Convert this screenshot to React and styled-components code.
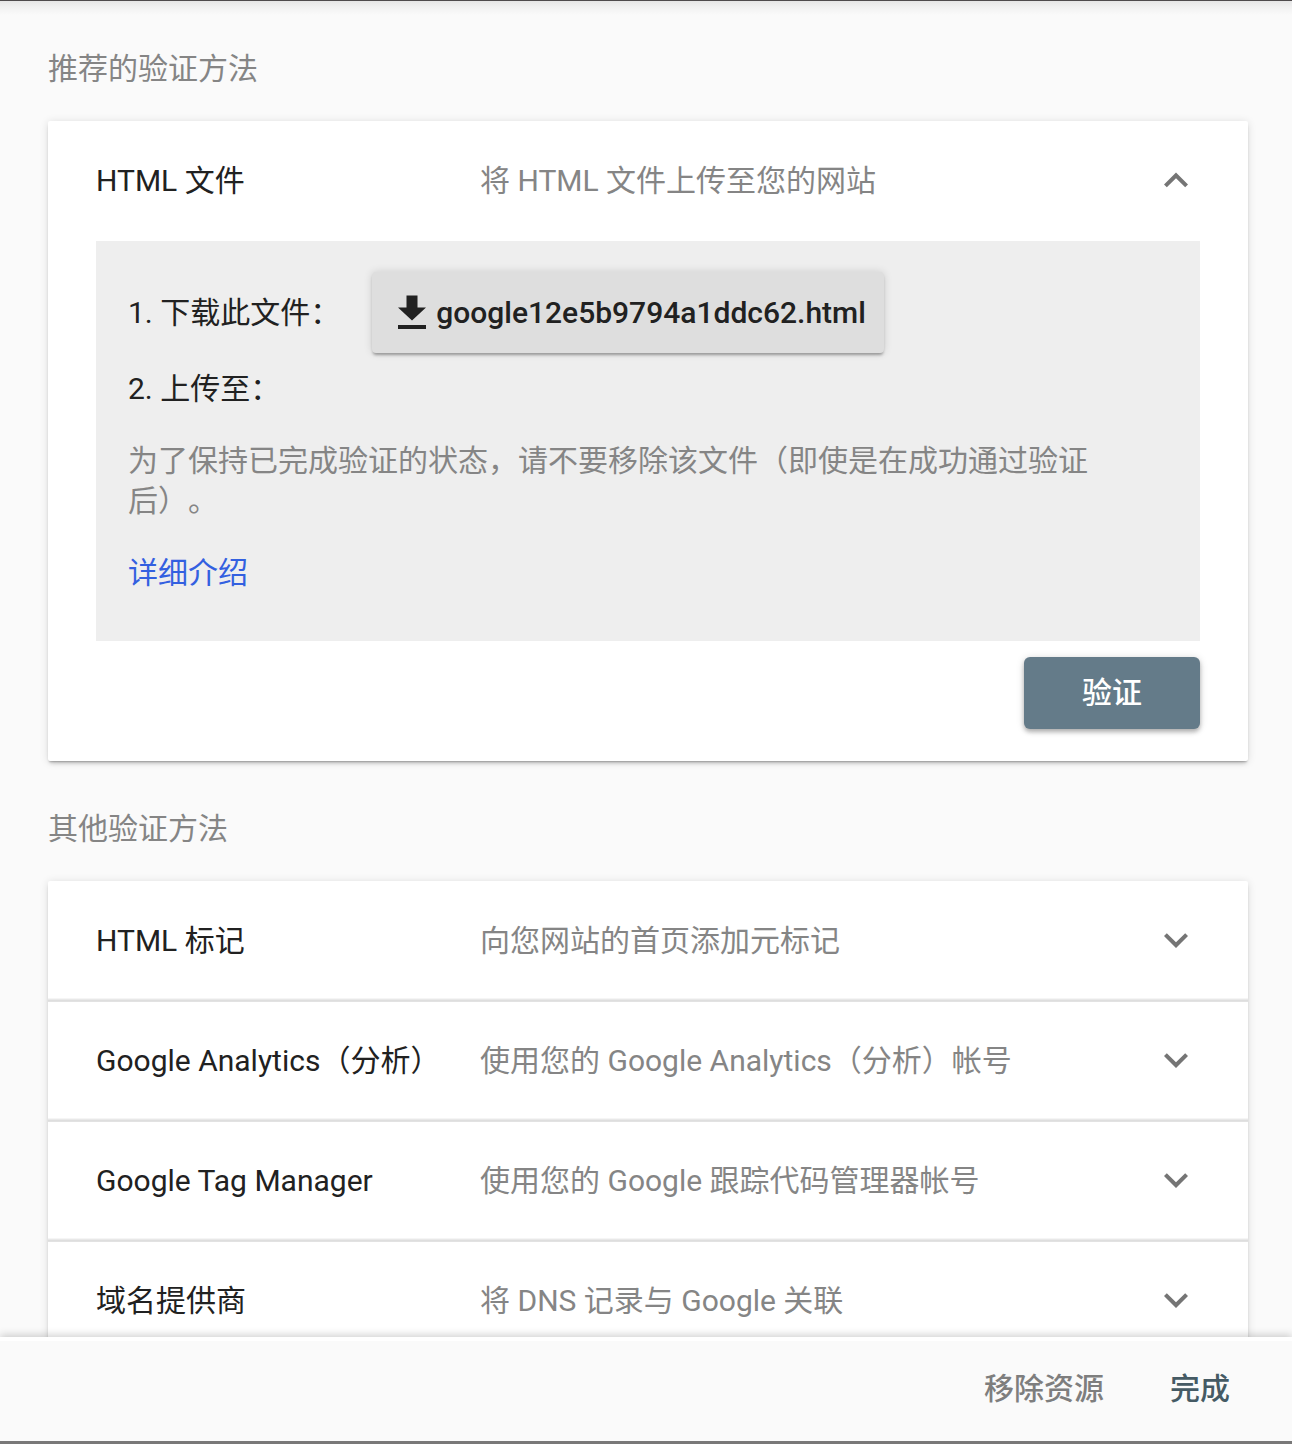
import React from "react";
import styled, { createGlobalStyle } from "styled-components";

const GlobalStyle = createGlobalStyle`
  * { box-sizing: border-box; }
  body {
    margin: 0;
    background: #fafafa;
    font-family: Roboto, "Noto Sans CJK SC", sans-serif;
    font-size: 30px;
    line-height: 40px;
    color: #212121;
    text-spacing-trim: space-all;
    text-autospace: no-autospace;
  }
`;

const Dialog = styled.div`
  display: flex;
  flex-direction: column;
  height: 1444px;
  overflow: hidden;
  border-top: 1px solid #4f4b4d;
  border-bottom: 3px solid #797878;
`;

const Content = styled.main`
  flex: 1;
  min-height: 0;
  overflow: hidden;
  padding: 48px 44px 0 48px;
  background: linear-gradient(#e6e6e6, #f1f1f1 6px, #fafafa 14px);
`;

const SectionTitle = styled.h2`
  margin: 0 0 32px;
  font-size: 30px;
  font-weight: 400;
  line-height: 40px;
  color: #858585;
`;

const Card = styled.section`
  height: ${(p) => p.$height}px;
  margin-bottom: 48px;
  background: #fff;
  border-radius: 2px;
  box-shadow: 0 4px 4px -2px rgba(0, 0, 0, 0.18), 0 2px 2px -1px rgba(0, 0, 0, 0.22),
    0 1px 8px rgba(0, 0, 0, 0.13);
`;

const Row = styled.div`
  display: grid;
  grid-template-columns: 384px 1fr 48px;
  align-items: center;
  height: 120px;
  padding: 0 48px;
  & + & {
    background: linear-gradient(#e2e2e2 1px, #fff 1px);
    box-shadow: 0 -1px 0 #dedede, 0 -2px 0 #e8e8e8, 0 -3px 0 #f5f5f5;
  }
`;

const Description = styled.span`
  color: #858585;
`;

const Instructions = styled.div`
  height: 400px;
  margin: 0 48px;
  padding: 31px 32px;
  background: #eee;
`;

const Step = styled.div`
  display: flex;
  align-items: center;
  height: ${(p) => p.$height}px;
  white-space: pre;
`;

const DownloadButton = styled.button`
  display: flex;
  align-items: center;
  gap: 8px;
  width: 512px;
  height: 81px;
  margin-left: 32px;
  padding: 0 0 0 24px;
  border: 0;
  border-radius: 4px;
  background: #dedede;
  color: #212121;
  font: 500 30px/40px Roboto, sans-serif;
  box-shadow: 0 3px 3px -1px rgba(0, 0, 0, 0.32), 0 0 8px rgba(0, 0, 0, 0.14);
`;

const Note = styled.p`
  margin: 16px 0 32px;
  color: #858585;
`;

const Link = styled.a`
  color: #3360e0;
`;

const Actions = styled.div`
  display: flex;
  justify-content: flex-end;
  padding: 16px 48px 0;
`;

const VerifyButton = styled.button`
  width: 176px;
  height: 72px;
  padding: 0;
  border: 0;
  border-radius: 6px;
  background: #647b89;
  color: #fff;
  font: 500 30px/40px Roboto, "Noto Sans CJK SC", sans-serif;
  box-shadow: 0 3px 4px rgba(0, 0, 0, 0.25), 0 1px 8px rgba(0, 0, 0, 0.14);
`;

const Footer = styled.footer`
  position: relative;
  display: flex;
  justify-content: flex-end;
  align-items: center;
  gap: 66px;
  height: 104px;
  padding: 0 62px 4px 0;
  border-top: 4px solid #fff;
  background: #fafafa;
  box-shadow: 0 -2px 8px rgba(0, 0, 0, 0.19);
`;

const FooterButton = styled.button`
  padding: 0;
  border: 0;
  background: none;
  color: ${(p) => (p.$primary ? "#455a64" : "#7e7e7e")};
  font: 500 30px/40px Roboto, "Noto Sans CJK SC", sans-serif;
`;

const ChevronIcon = styled.svg`
  display: block;
  width: 48px;
  height: 48px;
  fill: #757575;
`;

const CHEVRON_UP = "M7.41 15.16L12 10.58l4.59 4.58L18 13.75l-6-6-6 6z";
const CHEVRON_DOWN = "M7.41 8.09L12 12.67l4.59-4.58L18 9.5l-6 6-6-6z";

function Chevron({ open }) {
  return (
    <ChevronIcon viewBox="0 0 24 24">
      <path d={open ? CHEVRON_UP : CHEVRON_DOWN} />
    </ChevronIcon>
  );
}

function DownloadIcon() {
  return (
    <svg width="32" height="40" viewBox="0 0 32 40" fill="#212121">
      <path d="M10.5 2.500h11v12H30L16 27.500 2 14.500h8.500zM2 32h28v4H2z" />
    </svg>
  );
}

function MethodRow({ name, description, open }) {
  return (
    <Row>
      <span>{name}</span>
      <Description>{description}</Description>
      <Chevron open={open} />
    </Row>
  );
}

const otherMethods = [
  ["HTML 标记", "向您网站的首页添加元标记"],
  ["Google Analytics（分析）", "使用您的 Google Analytics（分析）帐号"],
  ["Google Tag Manager", "使用您的 Google 跟踪代码管理器帐号"],
  ["域名提供商", "将 DNS 记录与 Google 关联"],
];

export default function App() {
  return (
    <>
      <GlobalStyle />
      <Dialog lang="zh-CN">
        <Content>
          <SectionTitle>推荐的验证方法</SectionTitle>
          <Card $height={640}>
            <MethodRow name="HTML 文件" description="将 HTML 文件上传至您的网站" open />
            <Instructions>
              <Step $height={81}>
                1. 下载此文件：
                <DownloadButton>
                  <DownloadIcon />
                  google12e5b9794a1ddc62.html
                </DownloadButton>
              </Step>
              <Step $height={72}>2. 上传至：</Step>
              <Note>为了保持已完成验证的状态，请不要移除该文件（即使是在成功通过验证后）。</Note>
              <Link>详细介绍</Link>
            </Instructions>
            <Actions>
              <VerifyButton>验证</VerifyButton>
            </Actions>
          </Card>
          <SectionTitle>其他验证方法</SectionTitle>
          <Card $height={480}>
            {otherMethods.map(([name, description]) => (
              <MethodRow key={name} name={name} description={description} />
            ))}
          </Card>
        </Content>
        <Footer>
          <FooterButton>移除资源</FooterButton>
          <FooterButton $primary>完成</FooterButton>
        </Footer>
      </Dialog>
    </>
  );
}
